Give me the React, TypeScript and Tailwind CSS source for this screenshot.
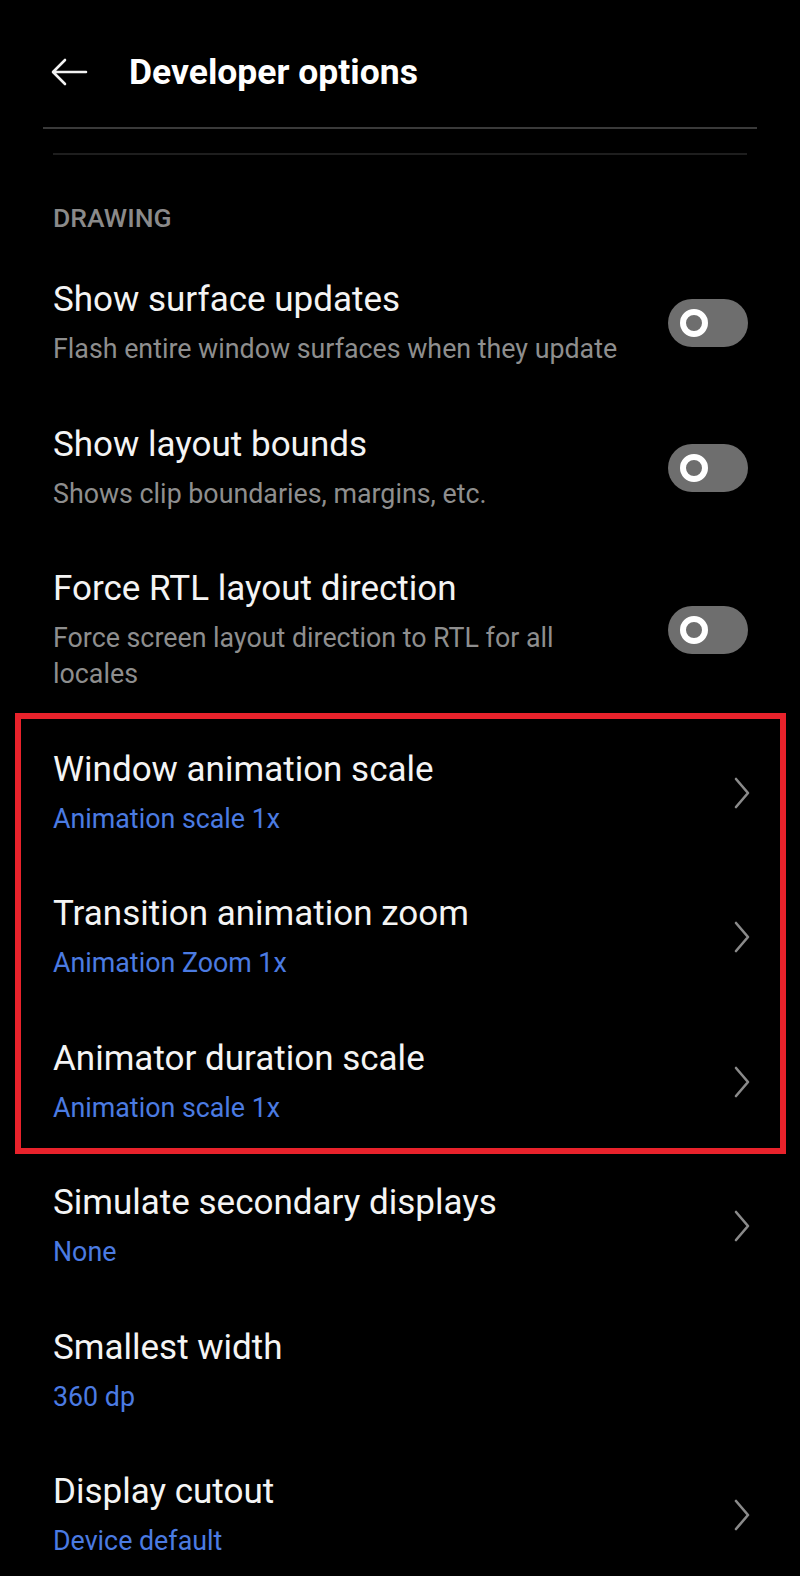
import React from 'react'

type Row = {
    title: string
    subtitle: string
    kind: 'toggle' | 'link' | 'none'
    blue?: boolean
}

const drawingRows: Row[] = [
    { title: 'Show surface updates', subtitle: 'Flash entire window surfaces when they update', kind: 'toggle' },
    { title: 'Show layout bounds', subtitle: 'Shows clip boundaries, margins, etc.', kind: 'toggle' },
    { title: 'Force RTL layout direction', subtitle: 'Force screen layout direction to RTL for all locales', kind: 'toggle' },
]

const animRows: Row[] = [
    { title: 'Window animation scale', subtitle: 'Animation scale 1x', kind: 'link', blue: true },
    { title: 'Transition animation zoom', subtitle: 'Animation Zoom 1x', kind: 'link', blue: true },
    { title: 'Animator duration scale', subtitle: 'Animation scale 1x', kind: 'link', blue: true },
]

const otherRows: Row[] = [
    { title: 'Simulate secondary displays', subtitle: 'None', kind: 'link', blue: true },
    { title: 'Smallest width', subtitle: '360 dp', kind: 'none', blue: true },
    { title: 'Display cutout', subtitle: 'Device default', kind: 'link', blue: true },
]

const Toggle = () => (
    <div className="flex h-[48px] w-[80px] shrink-0 items-center rounded-full bg-[#6e6e6e] pl-[12px]">
        <div className="h-[28px] w-[28px] rounded-full border-[6px] border-white bg-[#6e6e6e]" />
    </div>
)

const Chevron = () => (
    <svg width="20" height="32" viewBox="0 0 20 32" fill="none" className="shrink-0">
        <path d="M4 2 L16 16 L4 30" stroke="#8a8a8a" strokeWidth="2.6" strokeLinecap="round" strokeLinejoin="round" />
    </svg>
)

const SettingRow = ({ row }: { row: Row }) => (
    <div className="flex items-center pl-[53px] pr-[52px] pt-[28px] pb-[28.5px]">
        <div className="min-w-0 flex-1 pr-[44px]">
            <p className="text-[35px] leading-[42px] text-[#f4f4f4]">{row.title}</p>
            <p
                className={
                    row.blue
                        ? 'mt-[10px] text-[26.8px] leading-[36px] text-[#4b7be2]'
                        : 'mt-[10px] text-[26.8px] leading-[36px] text-[#8e8e8e]'
                }
            >
                {row.subtitle}
            </p>
        </div>
        {row.kind === 'toggle' && <Toggle />}
        {row.kind === 'link' && (
            <div className="-mr-[4px]">
                <Chevron />
            </div>
        )}
    </div>
)

export default function App() {
    return (
        <div className="min-h-[1576px] w-[800px] overflow-hidden bg-black" style={{ fontFamily: 'Roboto, "Noto Sans", sans-serif' }}>
            {/* top bar */}
            <div className="flex h-[127px] items-center pl-[50px] pt-[17px]">
                <svg width="40" height="30" viewBox="0 0 40 30" fill="none">
                    <path d="M36 15 H4 M15 3 L3 15 L15 27" stroke="#f2f2f2" strokeWidth="2.6" strokeLinecap="round" strokeLinejoin="round" />
                </svg>
                <h1 className="ml-[39px] text-[35.5px] font-bold leading-[40px] text-white">Developer options</h1>
            </div>
            <div className="mx-[43px] h-[2px] bg-[#3a3a3a]" />
            <div className="mx-[53px] mt-[24px] h-[2px] bg-[#1e1e1e]" />

            <p className="mt-[48px] pl-[53px] text-[26.5px] font-medium leading-[30px] text-[#8a8a8a]">DRAWING</p>

            <div className="mt-[18px]">
                {drawingRows.map(r => (
                    <SettingRow key={r.title} row={r} />
                ))}
            </div>

            <div className="relative">
                {animRows.map(r => (
                    <SettingRow key={r.title} row={r} />
                ))}
                <div className="pointer-events-none absolute -top-[8px] bottom-0 left-[15px] right-[14px] border-[6px] border-[#e8222b]" />
            </div>

            {otherRows.map(r => (
                <SettingRow key={r.title} row={r} />
            ))}
        </div>
    )
}
